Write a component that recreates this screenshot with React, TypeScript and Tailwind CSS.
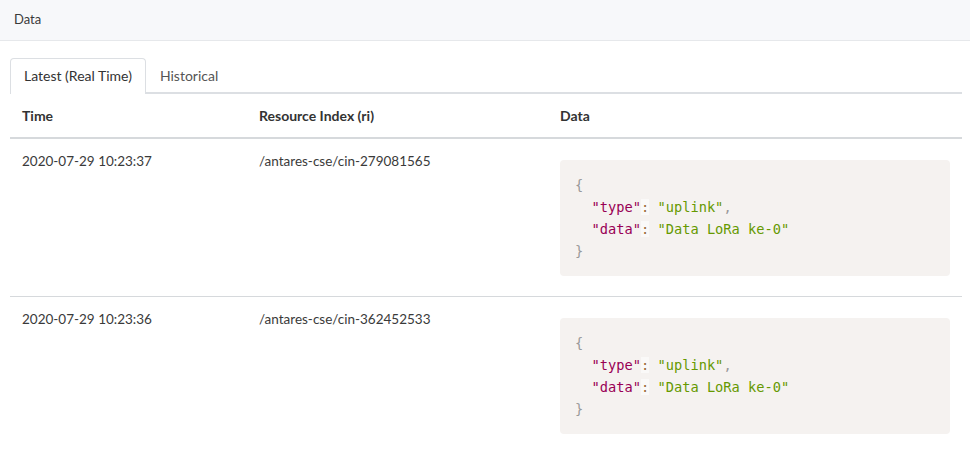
import React from 'react';

type Row = { time: string; ri: string };

const rows: Row[] = [
  { time: '2020-07-29 10:23:37', ri: '/antares-cse/cin-279081565' },
  { time: '2020-07-29 10:23:36', ri: '/antares-cse/cin-362452533' },
];

function JsonBlock() {
  return (
    <pre className="mt-[9px] mb-[8px] rounded bg-[#f5f2f0] px-[15px] py-[14px] text-[13.7px] leading-[22px] text-black font-['DejaVu_Sans_Mono',monospace]">
      <span className="text-[#999]">{'{'}</span>
      {'\n  '}
      <span className="text-[#905]">"type"</span>
      <span className="bg-white/50 text-[#9a6e3a]">:</span>{' '}
      <span className="text-[#690]">"uplink"</span>
      <span className="text-[#999]">,</span>
      {'\n  '}
      <span className="text-[#905]">"data"</span>
      <span className="bg-white/50 text-[#9a6e3a]">:</span>{' '}
      <span className="text-[#690]">"Data LoRa ke-0"</span>
      {'\n'}
      <span className="text-[#999]">{'}'}</span>
    </pre>
  );
}

export default function App() {
  return (
    <div className="min-h-[450px] w-[970px] bg-white text-[13.5px] text-[#3a3a3a] font-['Lato','Noto_Sans',sans-serif]">
      <div className="flex h-[41px] items-center border-b border-[#e6e8eb] bg-[#f7f8fa] px-[14px] text-[13px]">
        Data
      </div>

      <div className="px-[10px] pt-[17px] pr-[8px]">
        {/* Tabs */}
        <div className="flex border-b-2 border-[#dcdfe3]">
          <button className="-mb-[2px] h-[36px] rounded-t border border-b-0 border-[#dcdfe3] bg-white px-[13px] pb-[2px] text-[14px] text-[#333]">
            Latest (Real Time)
          </button>
          <button className="h-[34px] px-[14px] text-[14px] text-[#555]">Historical</button>
        </div>

        <table className="w-full border-collapse text-left">
          <thead>
            <tr className="border-b-2 border-[#d6d9dc]">
              <th className="w-[237px] px-[12px] py-[12px] text-[14px] font-bold leading-[19px] text-[#333]">Time</th>
              <th className="w-[301px] px-[12px] py-[12px] text-[14px] font-bold leading-[19px] text-[#333]">Resource Index (ri)</th>
              <th className="px-[12px] py-[12px] text-[14px] font-bold leading-[19px] text-[#333]">Data</th>
            </tr>
          </thead>
          <tbody>
            {rows.map((r, i) => (
              <tr key={i} className={i === 0 ? 'border-b border-[#d6d9dc]' : ''}>
                <td className="px-[12px] pt-[12px] align-top leading-[20px]">{r.time}</td>
                <td className="px-[12px] pt-[12px] align-top leading-[20px]">{r.ri}</td>
                <td className="px-[12px] pt-[12px] pb-[12px] align-top leading-[20px]">
                  <JsonBlock />
                </td>
              </tr>
            ))}
          </tbody>
        </table>
      </div>
    </div>
  );
}
